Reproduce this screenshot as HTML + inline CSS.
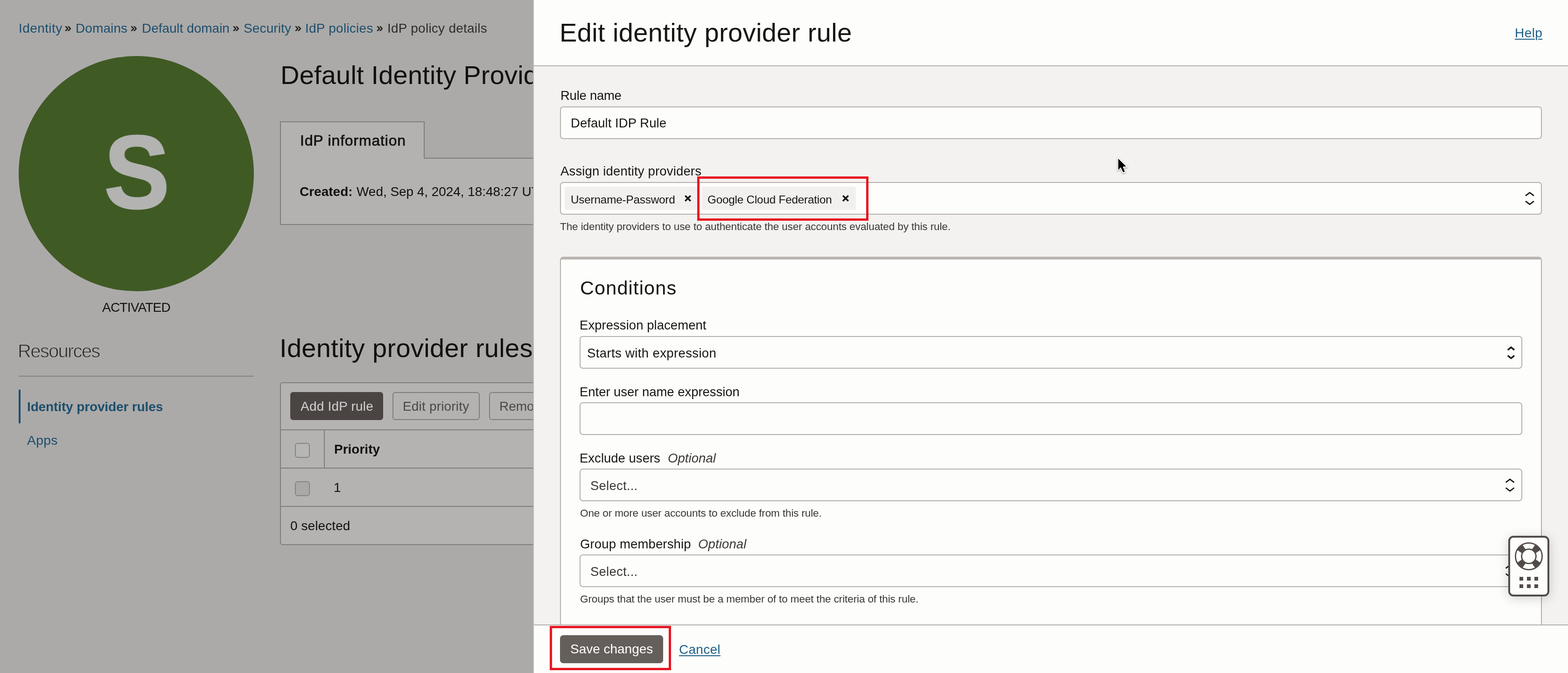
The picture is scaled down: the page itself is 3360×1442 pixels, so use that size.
<!DOCTYPE html>
<html lang="en">
<head>
<meta charset="utf-8">
<title>Edit identity provider rule</title>
<style>
html,body{margin:0;padding:0;}
body{background:#abaaa9;font-family:"Liberation Sans",sans-serif;color:#161513;}
#root{width:3360px;height:1442px;position:relative;overflow:hidden;background:#abaaa9;}
.b{position:absolute;box-sizing:border-box;}
.t{position:absolute;will-change:transform;white-space:nowrap;line-height:1;margin:0;padding:0;font-weight:400;}
a.t{text-decoration:none;}
.field{background:#fdfdfb;border:2px solid #b5b0ab;border-radius:7px;}
svg{position:absolute;overflow:visible;}

</style>
</head>
<body>
<div id="root">
<div class="b" id="page" style="left:0;top:0;width:1144px;height:1442px;overflow:hidden;background:#abaaa9;">
<nav aria-label="Breadcrumb">
<a class="t" style="left:39.92px;top:47.30px;font-size:28px;color:#1d4e6b;letter-spacing:0.409px;">Identity</a>
<span class="t" style="left:139.01px;top:48.26px;font-size:24.5px;color:#1c1b1a;-webkit-text-stroke:0.8px #1c1b1a;">»</span>
<a class="t" style="left:161.90px;top:47.30px;font-size:28px;color:#1d4e6b;letter-spacing:0.104px;">Domains</a>
<span class="t" style="left:279.61px;top:48.26px;font-size:24.5px;color:#1c1b1a;-webkit-text-stroke:0.8px #1c1b1a;">»</span>
<a class="t" style="left:303.70px;top:47.30px;font-size:28px;color:#1d4e6b;letter-spacing:-0.032px;">Default domain</a>
<span class="t" style="left:499.21px;top:48.26px;font-size:24.5px;color:#1c1b1a;-webkit-text-stroke:0.8px #1c1b1a;">»</span>
<a class="t" style="left:522.33px;top:47.30px;font-size:28px;color:#1d4e6b;letter-spacing:0.126px;">Security</a>
<span class="t" style="left:631.61px;top:48.26px;font-size:24.5px;color:#1c1b1a;-webkit-text-stroke:0.8px #1c1b1a;">»</span>
<a class="t" style="left:654.22px;top:47.30px;font-size:28px;color:#1d4e6b;letter-spacing:0.247px;">IdP policies</a>
<span class="t" style="left:807.01px;top:48.26px;font-size:24.5px;color:#1c1b1a;-webkit-text-stroke:0.8px #1c1b1a;">»</span>
<span class="t" style="left:829.82px;top:47.30px;font-size:28px;color:#2e2d2c;letter-spacing:0.247px;">IdP policy details</span>
</nav>
<div class="b" style="left:40px;top:120px;width:504px;height:504px;border-radius:50%;background:#405a24;"></div>
<span class="t" style="left:222.83px;top:257.16px;font-size:223.2px;color:#b3b3b2;font-weight:700;transform:scaleX(0.9447);transform-origin:0 0;-webkit-text-stroke:3px #b3b3b2;">S</span>
<span class="t" style="left:219.35px;top:645.10px;font-size:28px;color:#121110;letter-spacing:-0.785px;">ACTIVATED</span>
<h1 class="t" style="left:600.81px;top:132.90px;font-size:56px;color:#11100f;letter-spacing:0.190px;">Default Identity Provider Policy</h1>
<div class="b" style="left:600px;top:338px;width:700px;height:144px;border:2px solid #807d7b;background:#b3b2b1;"></div>
<div class="b" style="left:600px;top:260px;width:310px;height:80px;border:2px solid #807d7b;border-bottom:none;background:#b3b2b1;"></div>
<span class="t" style="left:642.65px;top:285.31px;font-size:32px;color:#11100f;letter-spacing:0.814px;-webkit-text-stroke:0.7px #11100f;">IdP information</span>
<span class="t" style="left:641.75px;top:396.90px;font-size:28px;color:#11100f;font-weight:700;">Created:</span>
<span class="t" style="left:764.28px;top:396.90px;font-size:28px;color:#11100f;letter-spacing:-0.050px;">Wed, Sep 4, 2024, 18:48:27 UTC</span>
<h2 class="t" style="left:38.22px;top:731.84px;font-size:40px;color:#1a1918;letter-spacing:-1.746px;-webkit-text-stroke:1.3px #abaaa9;">Resources</h2>
<div class="b" style="left:40px;top:805px;width:504px;height:2px;background:#858381;"></div>
<div class="b" style="left:40px;top:835px;width:4px;height:72px;background:#1d4e6b;"></div>
<a class="t" style="left:58.13px;top:857.60px;font-size:28px;color:#1d4e6b;letter-spacing:-0.129px;font-weight:700;">Identity provider rules</a>
<a class="t" style="left:57.74px;top:929.36px;font-size:28.4px;color:#1d4e6b;letter-spacing:0.250px;">Apps</a>
<h2 class="t" style="left:599.43px;top:718.40px;font-size:56px;color:#11100f;letter-spacing:0.328px;">Identity provider rules</h2>
<div class="b" style="left:600px;top:819px;width:700px;height:349px;border:2px solid #807d7b;border-radius:6px;background:#b4b3b1;"></div>
<div class="b" style="left:622px;top:840px;width:199px;height:60px;background:#4a4543;border-radius:6px;"></div>
<span class="t" style="left:644.15px;top:856.90px;font-size:28px;color:#d2d1d0;letter-spacing:0.201px;">Add IdP rule</span>
<div class="b" style="left:841px;top:840px;width:187px;height:60px;border:2px solid #7f7e7d;border-radius:6px;background:#b3b2b1;"></div>
<span class="t" style="left:862.90px;top:856.90px;font-size:28px;color:#4a4846;letter-spacing:0.176px;">Edit priority</span>
<div class="b" style="left:1048px;top:840px;width:160px;height:60px;border:2px solid #7f7e7d;border-radius:6px;background:#b3b2b1;"></div>
<span class="t" style="left:1069.70px;top:856.90px;font-size:28px;color:#4a4846;">Remove</span>
<div class="b" style="left:602px;top:920px;width:700px;height:2px;background:#807d7b;"></div>
<div class="b" style="left:602px;top:1002px;width:700px;height:2px;background:#807d7b;"></div>
<div class="b" style="left:602px;top:1084px;width:700px;height:2px;background:#807d7b;"></div>
<div class="b" style="left:694px;top:921px;width:2px;height:82px;background:#807d7b;"></div>
<div class="b" style="left:632px;top:949px;width:32px;height:32px;border:2px solid #858483;border-radius:6px;background:#b6b6b4;"></div>
<span class="t" style="left:716.33px;top:949.00px;font-size:28px;color:#11100f;font-weight:700;">Priority</span>
<div class="b" style="left:632px;top:1031px;width:32px;height:32px;border:2px solid #858483;border-radius:6px;background:#aaa9a8;"></div>
<span class="t" style="left:714.87px;top:1030.60px;font-size:28px;color:#11100f;">1</span>
<span class="t" style="left:622.41px;top:1113.30px;font-size:28px;color:#11100f;letter-spacing:0.084px;">0 selected</span>
</div>
<div class="b" style="left:1142px;top:0px;width:2px;height:1442px;background:#b9b7b5;"></div>
<div class="b" id="panel" style="left:1144px;top:0;width:2216px;height:1442px;background:#f3f2f0;"></div>
<div class="b" style="left:1144px;top:0px;width:2216px;height:142px;background:#fdfdfb;border-bottom:2px solid #b5b0ab;"></div>
<h1 class="t" style="left:1199.41px;top:42.20px;font-size:56px;color:#161513;letter-spacing:0.384px;">Edit identity provider rule</h1>
<a class="t" style="left:3245.70px;top:57.10px;font-size:28px;color:#1e5f87;letter-spacing:0.429px;text-decoration:underline;text-decoration-thickness:2px;text-underline-offset:3px;">Help</a>
<label class="t" style="left:1200.84px;top:191.02px;font-size:27.5px;color:#161513;letter-spacing:-0.264px;">Rule name</label>
<div class="b field" style="left:1200px;top:228px;width:2104px;height:70px;"></div>
<span class="t" style="left:1222.74px;top:250.02px;font-size:27.5px;color:#161513;letter-spacing:0.044px;">Default IDP Rule</span>
<label class="t" style="left:1200.75px;top:353.32px;font-size:27.5px;color:#161513;letter-spacing:0.162px;">Assign identity providers</label>
<div class="b field" style="left:1200px;top:390px;width:2104px;height:70px;"></div>
<div class="b" style="left:1210px;top:400px;width:284px;height:50px;background:#f1f0ee;border-radius:4px;"></div>
<span class="t" style="left:1222.63px;top:415.93px;font-size:24.3px;color:#161513;letter-spacing:-0.196px;">Username-Password</span>
<svg style="left:1467px;top:418px" width="14" height="14" viewBox="0 0 14 14"><path d="M1.2 1.2L12.8 12.8M12.8 1.2L1.2 12.8" stroke="#161513" stroke-width="3.6" fill="none"/></svg>
<div class="b" style="left:1504px;top:400px;width:330px;height:50px;background:#f1f0ee;border-radius:4px;"></div>
<span class="t" style="left:1516.48px;top:415.93px;font-size:24.3px;color:#161513;letter-spacing:-0.215px;">Google Cloud Federation</span>
<svg style="left:1805px;top:418px" width="14" height="14" viewBox="0 0 14 14"><path d="M1.2 1.2L12.8 12.8M12.8 1.2L1.2 12.8" stroke="#161513" stroke-width="3.6" fill="none"/></svg>
<svg style="left:0;top:0" width="1" height="1"><path d="M3269.1 419.4L3278 412.7L3286.9 419.4M3269.1 431.1L3278 437.8L3286.9 431.1" stroke="#161513" stroke-width="2.6" fill="none" stroke-linejoin="miter"/></svg>
<div class="b" style="left:1494px;top:378px;width:367px;height:95px;border:5px solid #e81723;"></div>
<span class="t" style="left:1200.29px;top:474.57px;font-size:22.6px;color:#3a3633;letter-spacing:-0.139px;">The identity providers to use to authenticate the user accounts evaluated by this rule.</span>
<div class="b" style="left:1200px;top:550px;width:2104px;height:800px;background:#fdfdfb;border:2px solid #b5b0ab;border-top:6px solid #bab5b1;border-radius:7px;"></div>
<h2 class="t" style="left:1242.60px;top:597.04px;font-size:41.3px;color:#161513;letter-spacing:1.216px;">Conditions</h2>
<label class="t" style="left:1242.44px;top:683.32px;font-size:27.5px;color:#161513;letter-spacing:0.047px;">Expression placement</label>
<div class="b field" style="left:1242px;top:720px;width:2020px;height:70px;"></div>
<span class="t" style="left:1258.35px;top:743.12px;font-size:27.5px;color:#161513;letter-spacing:0.373px;">Starts with expression</span>
<svg style="left:0;top:0" width="1" height="1"><path d="M3231 749.9L3238 744.1L3245 749.9M3231 761.9L3238 767.6999999999999L3245 761.9" stroke="#161513" stroke-width="3.4" fill="none" stroke-linejoin="round"/></svg>
<label class="t" style="left:1242.44px;top:825.82px;font-size:27.5px;color:#161513;letter-spacing:-0.047px;">Enter user name expression</label>
<div class="b field" style="left:1242px;top:862px;width:2020px;height:70px;"></div>
<label class="t" style="left:1242.44px;top:967.72px;font-size:27.5px;color:#161513;letter-spacing:0.011px;">Exclude users</label>
<span class="t" style="left:1431.01px;top:967.72px;font-size:27.5px;color:#3a3633;letter-spacing:0.064px;font-style:italic;">Optional</span>
<div class="b field" style="left:1242px;top:1004px;width:2020px;height:70px;"></div>
<span class="t" style="left:1264.55px;top:1026.72px;font-size:27.5px;color:#3a3633;letter-spacing:0.226px;">Select...</span>
<svg style="left:0;top:0" width="1" height="1"><path d="M3226.7 1033.6000000000001L3235.6 1026.9L3244.5 1033.6000000000001M3226.7 1045.3L3235.6 1052.0L3244.5 1045.3" stroke="#161513" stroke-width="2.6" fill="none" stroke-linejoin="miter"/></svg>
<span class="t" style="left:1243.13px;top:1088.57px;font-size:22.6px;color:#3a3633;letter-spacing:-0.164px;">One or more user accounts to exclude from this rule.</span>
<label class="t" style="left:1243.12px;top:1151.62px;font-size:27.5px;color:#161513;letter-spacing:0.144px;">Group membership</label>
<span class="t" style="left:1496.01px;top:1151.62px;font-size:27.5px;color:#3a3633;letter-spacing:0.135px;font-style:italic;">Optional</span>
<div class="b field" style="left:1242px;top:1188px;width:2020px;height:70px;"></div>
<span class="t" style="left:1264.55px;top:1210.72px;font-size:27.5px;color:#3a3633;letter-spacing:0.226px;">Select...</span>
<svg style="left:0;top:0" width="1" height="1"><path d="M3226.7 1217.6000000000001L3235.6 1210.9L3244.5 1217.6000000000001M3226.7 1229.3L3235.6 1236.0L3244.5 1229.3" stroke="#161513" stroke-width="2.6" fill="none" stroke-linejoin="miter"/></svg>
<span class="t" style="left:1243.06px;top:1273.07px;font-size:22.6px;color:#3a3633;letter-spacing:-0.144px;">Groups that the user must be a member of to meet the criteria of this rule.</span>
<div class="b" style="left:1144px;top:1338px;width:2216px;height:104px;background:#fdfdfb;border-top:2px solid #b5b0ab;"></div>
<div class="b" style="left:1200px;top:1361px;width:221px;height:60px;background:#655f5b;border-radius:7px;"></div>
<span class="t" style="left:1221.83px;top:1377.30px;font-size:28px;color:#ffffff;letter-spacing:-0.016px;">Save changes</span>
<div class="b" style="left:1178px;top:1341px;width:260px;height:95px;border:5px solid #e81723;"></div>
<a class="t" style="left:1454.98px;top:1378.10px;font-size:28px;color:#1e5f87;letter-spacing:0.287px;text-decoration:underline;text-decoration-thickness:2px;text-underline-offset:3px;">Cancel</a>
<div class="b" style="left:3232px;top:1148px;width:88px;height:130px;background:#fdfdfb;border:4px solid #514c48;border-radius:11px;box-shadow:0 4px 24px rgba(0,0,0,0.18);"></div>
<svg style="left:3246px;top:1162px" width="60" height="60" viewBox="-30 -30 60 60">
<circle r="28.6" fill="none" stroke="#514c48" stroke-width="2.8"/>
<circle r="15.4" fill="none" stroke="#514c48" stroke-width="2.8"/>
<g fill="#514c48">
<path id="lb" d="M-8.0 -27.46 A28.6 28.6 0 0 1 8.0 -27.46 L5.6 -14.35 A15.4 15.4 0 0 0 -5.6 -14.35 Z" transform="rotate(45)"/>
<path d="M-8.0 -27.46 A28.6 28.6 0 0 1 8.0 -27.46 L5.6 -14.35 A15.4 15.4 0 0 0 -5.6 -14.35 Z" transform="rotate(135)"/>
<path d="M-8.0 -27.46 A28.6 28.6 0 0 1 8.0 -27.46 L5.6 -14.35 A15.4 15.4 0 0 0 -5.6 -14.35 Z" transform="rotate(225)"/>
<path d="M-8.0 -27.46 A28.6 28.6 0 0 1 8.0 -27.46 L5.6 -14.35 A15.4 15.4 0 0 0 -5.6 -14.35 Z" transform="rotate(315)"/>
</g></svg>
<div class="b" style="left:3256px;top:1236px;width:8px;height:8px;background:#514c48;"></div>
<div class="b" style="left:3272px;top:1236px;width:8px;height:8px;background:#514c48;"></div>
<div class="b" style="left:3288px;top:1236px;width:8px;height:8px;background:#514c48;"></div>
<div class="b" style="left:3256px;top:1252px;width:8px;height:8px;background:#514c48;"></div>
<div class="b" style="left:3272px;top:1252px;width:8px;height:8px;background:#514c48;"></div>
<div class="b" style="left:3288px;top:1252px;width:8px;height:8px;background:#514c48;"></div>
<svg style="left:0;top:0" width="1" height="1">
<path d="M2394.8 335.8 L2394.8 367.6 L2401.2 361.4 L2405.6 372 L2412.6 369 L2408.8 359.2 L2417.6 358.6 Z" fill="#ffffff" style="filter:drop-shadow(0 1px 1.5px rgba(0,0,0,.45))"/>
<path d="M2396.3 340 L2396.3 364 L2401.6 358.4 L2406.8 369.2 L2410.3 367.5 L2406 357 L2413.3 356.7 Z" fill="#000000"/>
</svg>
</div>
</body>
</html>
